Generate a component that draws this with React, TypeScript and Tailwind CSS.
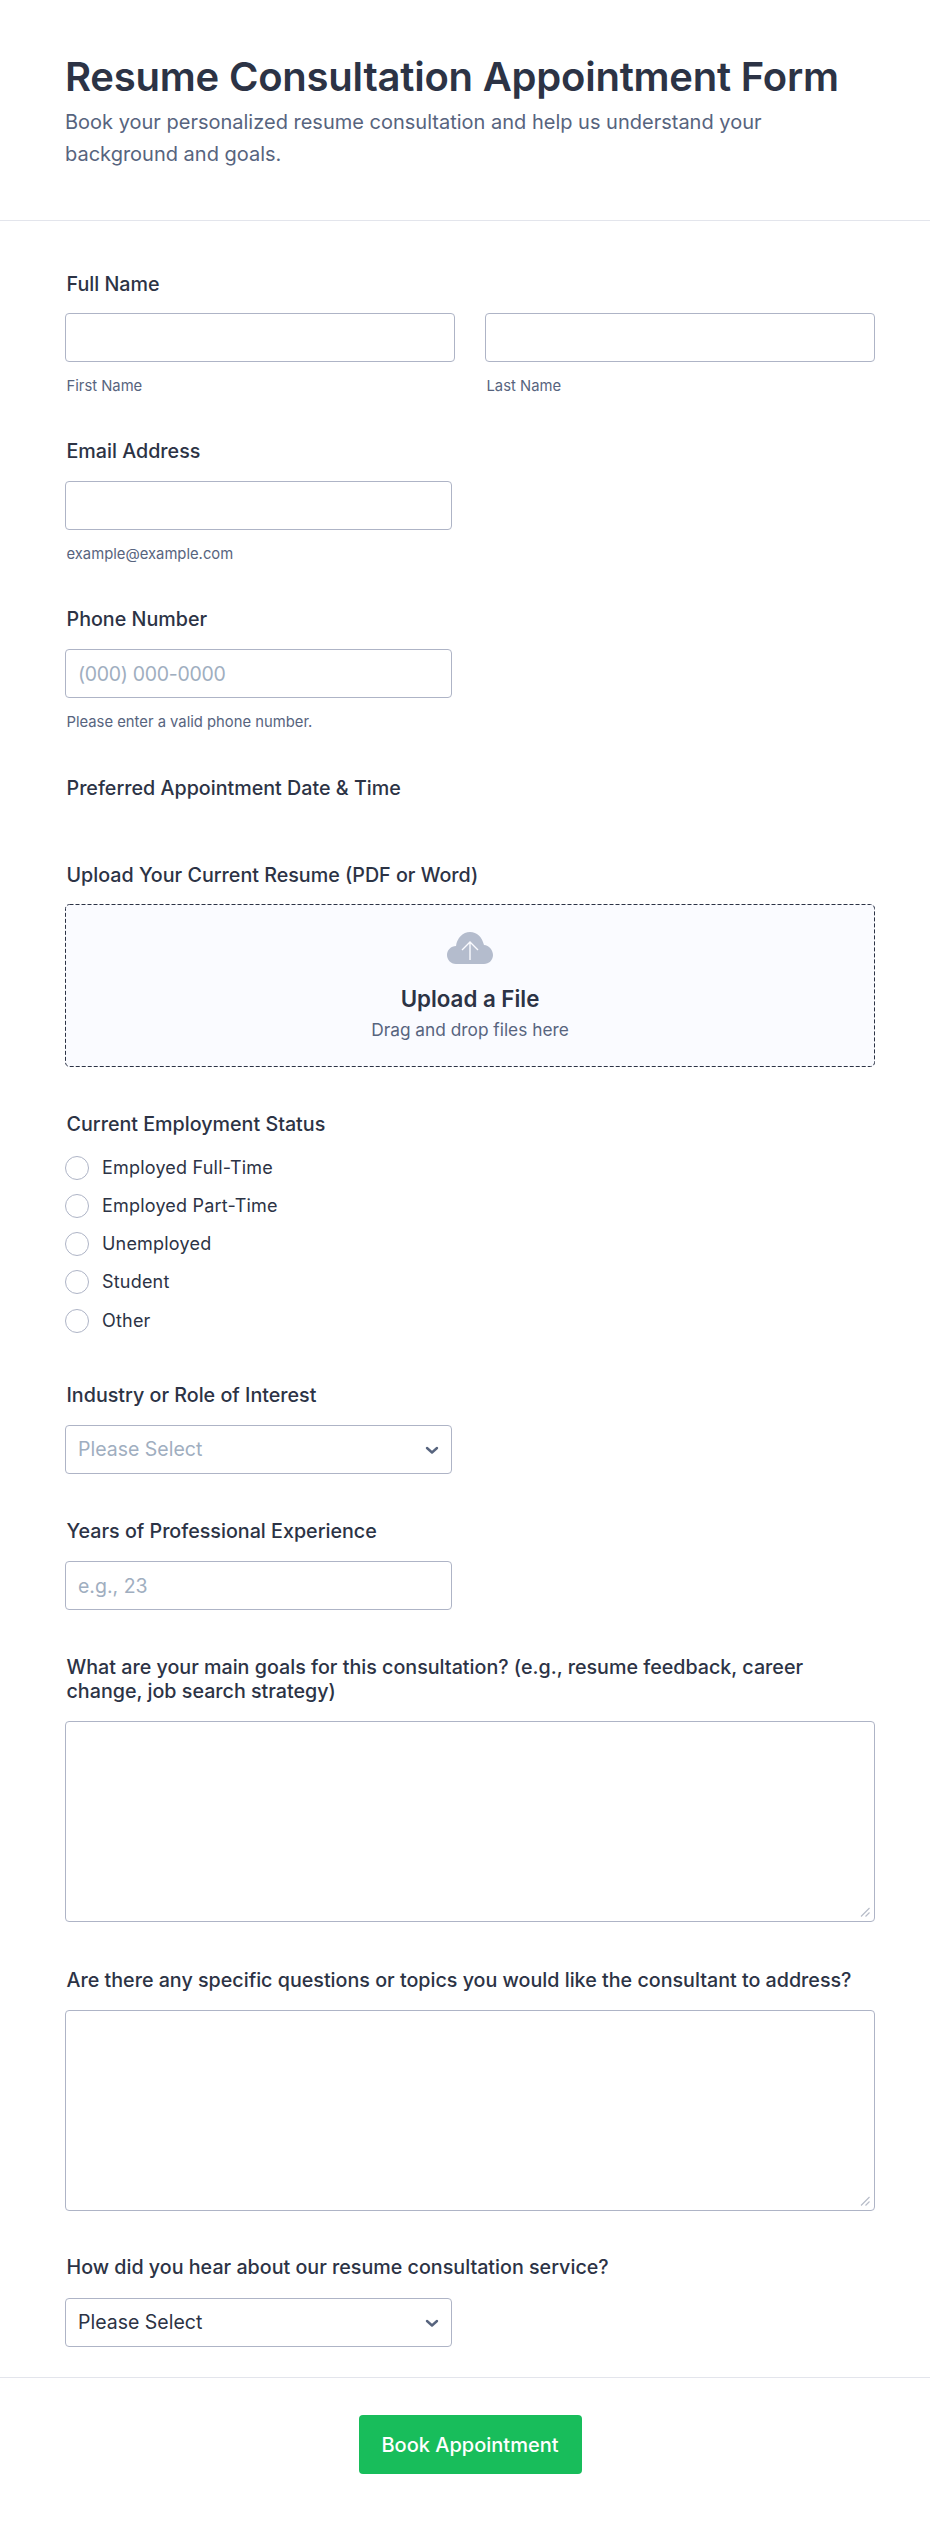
import React from "react";

const inputCls =
  "block w-full h-[49px] rounded-[4px] border border-[#aeb4c6] bg-white px-3 text-[19.5px] text-[#2c3345] placeholder:text-[#a0aec0] outline-none";

function Label({ children }: { children: React.ReactNode }) {
  return <div className="px-[1.5px] text-[19.7px] leading-[24px] font-[450] text-[#2c3345]">{children}</div>;
}

function Sub({ children }: { children: React.ReactNode }) {
  return <div className="mt-[15px] px-[1.5px] text-[14.8px] leading-[18px] text-[#57647e]">{children}</div>;
}

function Select({ color }: { color: string }) {
  return (
    <div className={`flex h-[49px] w-[387px] items-center justify-between rounded-[4px] border border-[#aeb4c6] bg-white pl-3 pr-[12px] text-[19.5px] ${color}`}>
      <span>Please Select</span>
      <svg width="14" height="14" viewBox="0 0 14 14" fill="none" stroke="#57647e" strokeWidth="2.4" strokeLinecap="round" strokeLinejoin="round">
        <path d="M2 5l5 4.500L12 5" />
      </svg>
    </div>
  );
}

function Radio({ label }: { label: string }) {
  return (
    <div className="flex h-[24px] items-center gap-[13px]">
      <span className="h-[24px] w-[24px] shrink-0 rounded-full border border-[#aeb4c6] bg-white" />
      <span className="text-[18px] leading-[24px] tracking-[0.2px] text-[#2c3345]">{label}</span>
    </div>
  );
}

function TextArea({ className }: { className: string }) {
  return (
    <div className={`relative h-[201px] w-[810px] ${className}`}>
      <textarea className="block h-full w-full resize-none rounded-[4px] border border-[#aeb4c6] bg-white outline-none" />
      <svg className="absolute bottom-[5px] right-[5px]" width="10" height="10" viewBox="0 0 10 10" fill="none" stroke="#b8bdc9" strokeWidth="1.200">
        <path d="M1 9.500 9.500 1M5.500 9.500 9.500 5.500" />
      </svg>
    </div>
  );
}

export default function App() {
  return (
    <div className="w-[930px] h-[2524px] bg-white font-['Inter',sans-serif] overflow-hidden">
      <header className="h-[221px] border-b border-[#e3e5ec] px-[65px] pt-[52px]">
        <h1 className="text-[40px] leading-[50px] tracking-[-0.22px] font-semibold text-[#2c3345]">Resume Consultation Appointment Form</h1>
        <p className="mt-[4px] w-[760px] text-[20px] leading-[32px] text-[#57647e]">
          Book your personalized resume consultation and help us understand your background and goals.
        </p>
      </header>

      <main className="pl-[65px] pr-[55px]">
        <section className="pt-[51px]">
          <Label>Full Name</Label>
          <div className="mt-[17px] flex gap-[30px]">
            <div className="w-[390px]">
              <input className={inputCls} />
              <Sub>First Name</Sub>
            </div>
            <div className="w-[390px]">
              <input className={inputCls} />
              <Sub>Last Name</Sub>
            </div>
          </div>
        </section>

        <section className="pt-[44px]">
          <Label>Email Address</Label>
          <div className="mt-[18px] w-[387px]">
            <input className={inputCls} />
            <Sub>example@example.com</Sub>
          </div>
        </section>

        <section className="pt-[44px]">
          <Label>Phone Number</Label>
          <div className="mt-[18px] w-[387px]">
            <input className={`${inputCls} tracking-[-0.3px]`} placeholder="(000) 000-0000" />
            <Sub>Please enter a valid phone number.</Sub>
          </div>
        </section>

        <section className="pt-[45px]">
          <Label>Preferred Appointment Date &amp; Time</Label>
        </section>

        <section className="pt-[63px]">
          <Label>Upload Your Current Resume (PDF or Word)</Label>
          <div className="relative mt-[17px] flex h-[163px] flex-col items-center rounded-[4px] bg-[#fafbff] pt-[27px]">
            <svg className="absolute inset-0" width="810" height="163" fill="none">
              <rect x=".5" y=".5" width="809" height="162" rx="4" stroke="#2c3345" strokeDasharray="4 2" />
            </svg>
            <svg width="48" height="34" viewBox="0 0 48 34">
              <path
                fill="#b4bccd"
                d="M10 33C4.500 33 1 28.500 1 24C1 19 5 15 10 15C11 7 17 1 24 1C31 1 36 6 38 14C43 14.500 47 19 47 24C47 29 43 33 38 33Z"
              />
              <path d="M24 29V11M16 19l8-8 8 8" fill="none" stroke="#fafbff" strokeWidth="1.400" />
            </svg>
            <div className="mt-[20px] text-[22.3px] leading-[28px] font-semibold text-[#2c3345]">Upload a File</div>
            <div className="mt-[5px] text-[17.3px] leading-[24px] text-[#57647e]">Drag and drop files here</div>
          </div>
        </section>

        <section className="pt-[45px]">
          <Label>Current Employment Status</Label>
          <div className="mt-[19.500px] flex flex-col gap-[14.250px]">
            <Radio label="Employed Full-Time" />
            <Radio label="Employed Part-Time" />
            <Radio label="Unemployed" />
            <Radio label="Student" />
            <Radio label="Other" />
          </div>
        </section>

        <section className="pt-[50.500px]">
          <Label>Industry or Role of Interest</Label>
          <div className="mt-[18px]">
            <Select color="text-[#a0aec0]" />
          </div>
        </section>

        <section className="pt-[45px]">
          <Label>Years of Professional Experience</Label>
          <div className="mt-[18px] w-[387px]">
            <input className={inputCls} placeholder="e.g., 23" />
          </div>
        </section>

        <section className="pt-[45px]">
          <Label>
            What are your main goals for this consultation? (e.g., resume feedback, career change, job search strategy)
          </Label>
          <TextArea className="mt-[18px]" />
        </section>

        <section className="pt-[46px]">
          <Label>Are there any specific questions or topics you would like the consultant to address?</Label>
          <TextArea className="mt-[18px]" />
        </section>

        <section className="pt-[44px]">
          <Label>How did you hear about our resume consultation service?</Label>
          <div className="mt-[19px]">
            <Select color="text-[#2c3345]" />
          </div>
        </section>
      </main>

      <footer className="mt-[30px] flex justify-center border-t border-[#e3e5ec] pl-[10px] pt-[37px]">
        <button className="h-[59px] w-[223px] rounded-[4px] bg-[#18bd5b] text-[20px] font-medium text-white">Book Appointment</button>
      </footer>
    </div>
  );
}
